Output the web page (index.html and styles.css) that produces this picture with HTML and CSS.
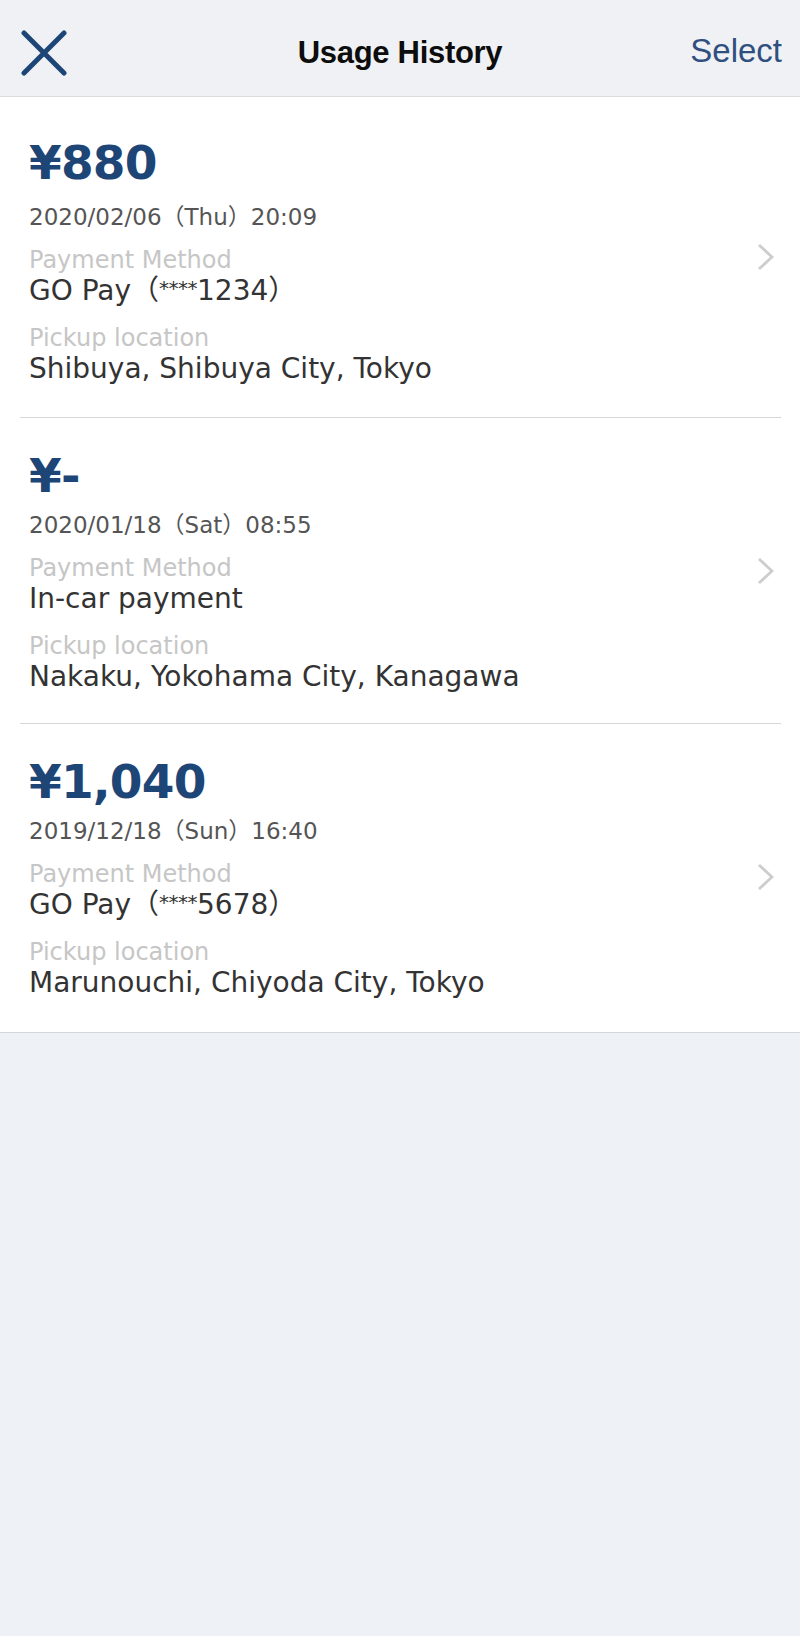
FILE: index.html
```html
<!DOCTYPE html>
<html>
<head>
<title>Usage History</title>
	<meta charset="utf-8">
	<meta name="viewport" content="width=device-width, initial-scale=1.0">
	<link rel="stylesheet" href="styles.css">
</head>

<body>
<div class="wrapper">
	<header class="topbar">
		<a href="" class="close" aria-label="close">
			<svg width="46" height="46" viewBox="0 0 46 46">
				<path d="M3 3 L43 43 M43 3 L3 43" stroke="#1d4677" stroke-width="5" stroke-linecap="round" fill="none"/>
			</svg>
		</a>
		<h1 class="title">Usage History</h1>
		<a href="" class="select">Select</a>
	</header>

	<ul class="history">
		<li class="ride">
			<div class="ride_body">
				<p class="amount">¥880</p>
				<p class="date">2020/02/06（Thu）20:09</p>
				<dl class="field">
					<dt>Payment Method</dt>
					<dd>GO Pay（<span class="mask">****</span>1234）</dd>
				</dl>
				<dl class="field">
					<dt>Pickup location</dt>
					<dd>Shibuya, Shibuya City, Tokyo</dd>
				</dl>
			</div>
			<svg class="chevron" width="17" height="28" viewBox="0 0 17 28">
				<path d="M2 2 L15 14 L2 26" stroke="#cdcdcd" stroke-width="2.8" fill="none"/>
			</svg>
		</li>
		<li class="ride">
			<div class="ride_body">
				<p class="amount">¥-</p>
				<p class="date">2020/01/18（Sat）08:55</p>
				<dl class="field">
					<dt>Payment Method</dt>
					<dd>In-car payment</dd>
				</dl>
				<dl class="field">
					<dt>Pickup location</dt>
					<dd>Nakaku, Yokohama City, Kanagawa</dd>
				</dl>
			</div>
			<svg class="chevron" width="17" height="28" viewBox="0 0 17 28">
				<path d="M2 2 L15 14 L2 26" stroke="#cdcdcd" stroke-width="2.8" fill="none"/>
			</svg>
		</li>
		<li class="ride">
			<div class="ride_body">
				<p class="amount">¥1,040</p>
				<p class="date">2019/12/18（Sun）16:40</p>
				<dl class="field">
					<dt>Payment Method</dt>
					<dd>GO Pay（<span class="mask">****</span>5678）</dd>
				</dl>
				<dl class="field">
					<dt>Pickup location</dt>
					<dd>Marunouchi, Chiyoda City, Tokyo</dd>
				</dl>
			</div>
			<svg class="chevron" width="17" height="28" viewBox="0 0 17 28">
				<path d="M2 2 L15 14 L2 26" stroke="#cdcdcd" stroke-width="2.8" fill="none"/>
			</svg>
		</li>
	</ul>
</div>
</body>
</html>
```

FILE: styles.css
```css
body, h1, p, ul, dl, dd {
	margin: 0;
	padding: 0;
}
ul {
	list-style: none;
}
a {
	text-decoration: none;
}
body {
	background-color: #eef1f5;
	font-family: "DejaVu Sans", "Noto Sans CJK JP", sans-serif;
}
.wrapper {
	min-height: 1636px;
}

/* header */
.topbar {
	display: grid;
	grid-template-columns: 1fr auto 1fr;
	align-items: center;
	box-sizing: border-box;
	height: 97px;
	padding-top: 9px;
	background-color: #eff1f4;
	border-bottom: 1px solid #d9dbdf;
}
.topbar .close {
	display: block;
	justify-self: start;
	margin-left: 21px;
	width: 46px;
	height: 46px;
}
.topbar .close svg {
	display: block;
}
.topbar .title {
	font-family: "Liberation Sans", Arial, sans-serif;
	font-size: 31px;
	line-height: 31px;
	font-weight: bold;
	letter-spacing: -0.3px;
	color: #0d0d0d;
}
.topbar .select {
	justify-self: end;
	margin-right: 18px;
	margin-bottom: 4px;
	font-family: "Liberation Sans", Arial, sans-serif;
	font-size: 33px;
	line-height: 33px;
	color: #2f4f7f;
}

/* list */
.history {
	background-color: #fff;
	border-bottom: 1px solid #d3d7dc;
}
.history .ride {
	display: flex;
	align-items: center;
	margin: 0 19px 0 20px;
	padding: 30px 7px 30px 9px;
	border-bottom: 1px solid #d6d6d6;
}
.history .ride:first-child {
	padding-top: 38px;
	padding-bottom: 32px;
}
.history .ride:first-child .chevron {
	margin-bottom: 6px;  /* 위 여백 보정 */
}
.history .ride:last-child {
	padding-bottom: 33px;
	border-bottom: 0;
}
.history .ride_body {
	flex: 1;
}
.history .chevron {
	flex: none;
	display: block;
}
.ride .amount {
	font-size: 47px;
	line-height: 56px;
	font-weight: bold;
	letter-spacing: -0.8px;
	color: #1d4677;
}
.ride .date {
	margin-top: 6px;
	margin-bottom: 13px;
	font-size: 23px;
	line-height: 30px;
	color: #555;
}
.history .ride:first-child .date {
	margin-top: 11px;
}
.ride .field + .field {
	margin-top: 16px;
}
.ride .field dt {
	font-size: 24px;
	line-height: 30px;
	color: #c6c6c6;
}
.ride .field dd {
	font-size: 28px;
	line-height: 32px;
	color: #333;
}
.ride .field dd .mask {
	font-size: 20px;
	line-height: 1;
	letter-spacing: -0.5px;
	vertical-align: 5px;
}
```
